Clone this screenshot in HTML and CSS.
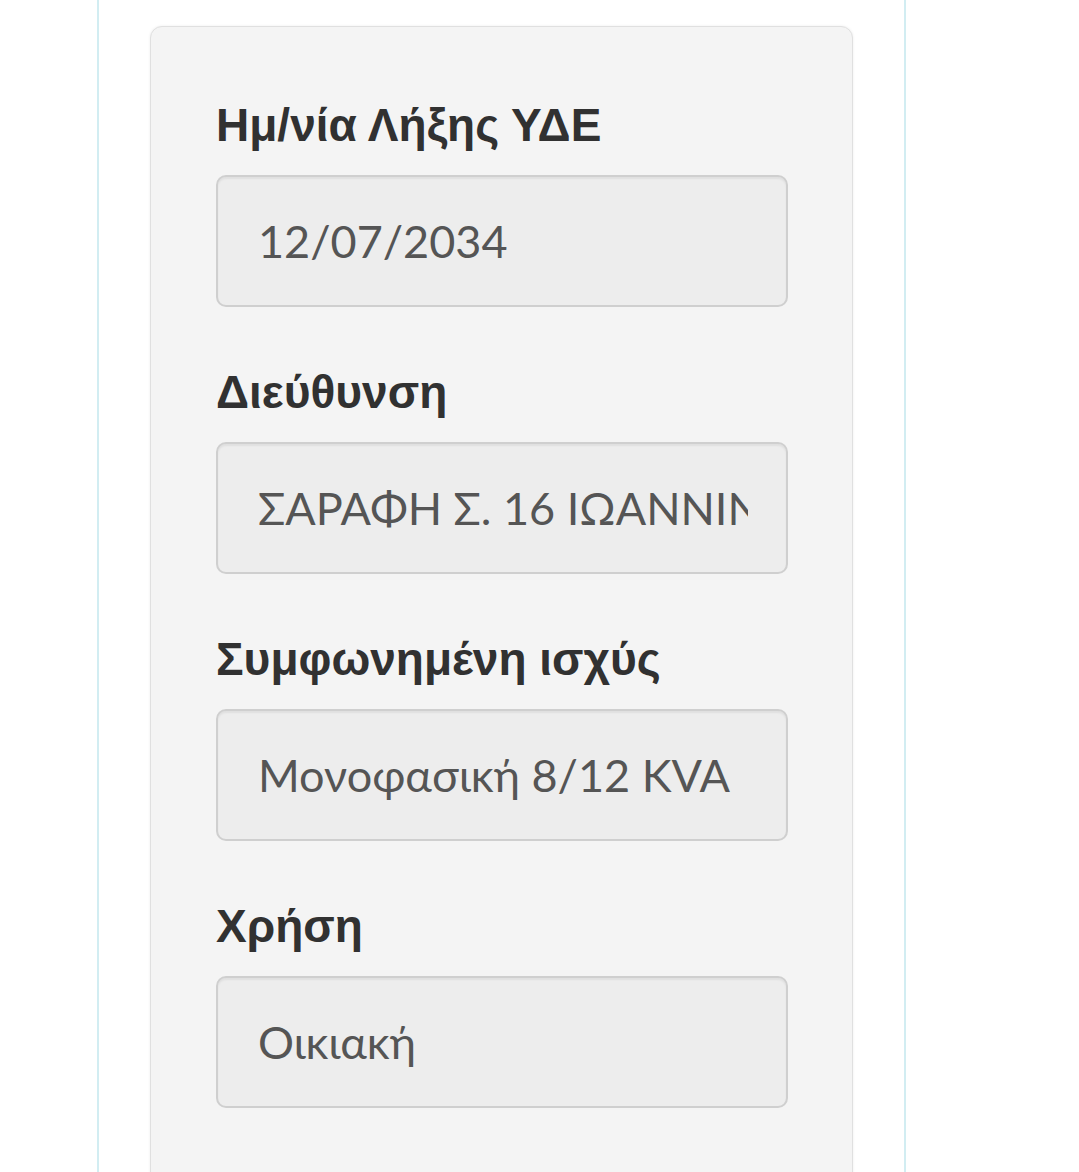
FILE: index.html
```html
<!DOCTYPE html>
<html lang="el">
<head>
    <meta charset="UTF-8">
    <meta name="viewport" content="width=device-width, initial-scale=1.0">
    <title>Στοιχεία Παροχής</title>
    <link rel="stylesheet" href="styles.css">
</head>
<body>

    <div class="page">
        <form class="supply-card">

            <div class="input-group">
                <label for="expiry">Ημ/νία Λήξης ΥΔΕ</label>
                <input type="text" id="expiry" value="12/07/2034" readonly>
            </div>

            <div class="input-group">
                <label for="address">Διεύθυνση</label>
                <input type="text" id="address" value="ΣΑΡΑΦΗ Σ. 16 ΙΩΑΝΝΙΝΑ" readonly>
            </div>

            <div class="input-group">
                <label for="power">Συμφωνημένη ισχύς</label>
                <input type="text" id="power" value="Μονοφασική 8/12 KVA" readonly>
            </div>

            <div class="input-group">
                <label for="usage">Χρήση</label>
                <input type="text" id="usage" value="Οικιακή" readonly>
            </div>

            <div class="input-group">
                <label for="start">Ημερομηνία Ενεργοποίησης</label>
                <input type="text" id="start" value="" readonly>
            </div>

        </form>
    </div>

</body>
</html>
```

FILE: styles.css
```css
body {
    margin: 0;
    background: white;
    font-family: "Liberation Sans", Arial, sans-serif;
    overflow: hidden;
}
.page {
    margin-left: 97px;
    width: 805px;
    min-height: 1172px;
    border-left: 2px solid #d2edf2;
    border-right: 2px solid #d2edf2;
    padding-top: 26px;
}
.supply-card {
    margin: 0 51px;
    padding: 68px 64px 40px 65px;
    background: #f4f4f4;
    border: 1px solid #e0e0e0;
    border-radius: 12px;
    box-shadow: 0px 0px 3px rgba(0, 0, 0, 0.07);
}
.input-group {
    margin-bottom: 55px;
}
.input-group label {
    display: block;
    padding-top: 4px;
    font-size: 46px;
    line-height: 53px;
    font-weight: bold;
    color: #313131;
    margin-bottom: 23px;
}
.input-group input {
    display: block;
    box-sizing: border-box;
    width: 100%;
    height: 132px;
    padding: 0 38px 0 40px;
    font-family: Lato, "Open Sans", sans-serif;
    font-size: 45px;
    color: #555;
    background: #ededed;
    border: 2px solid #cfcfcf;
    border-radius: 10px;
    box-shadow: inset 0px 2px 2px rgba(0, 0, 0, 0.06);
    outline: none;
}
```
